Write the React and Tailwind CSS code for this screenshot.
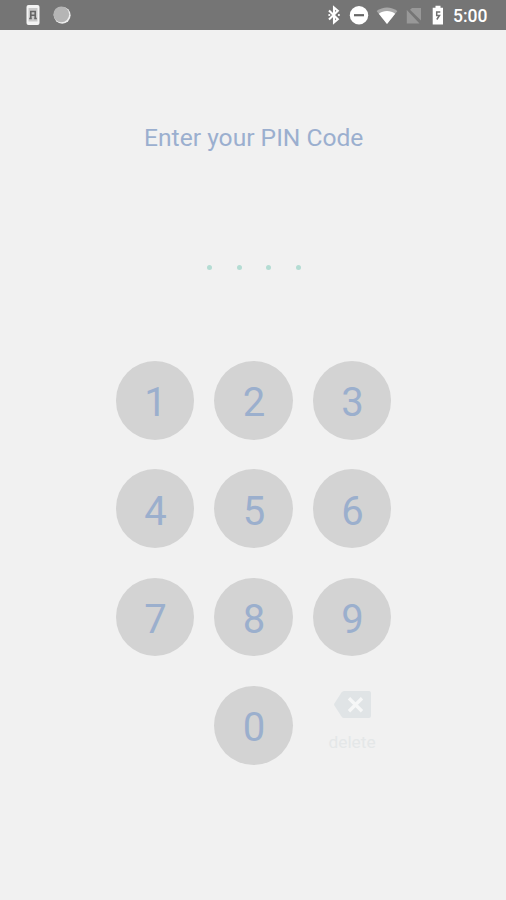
const rows = [
  ['1', '2', '3'],
  ['4', '5', '6'],
  ['7', '8', '9'],
];

function Key({ digit }) {
  return (
    <button className="flex h-[78.5px] w-[78.5px] items-center justify-center rounded-full bg-[#d3d3d3] pt-[6px] pl-[1px] text-[40px] leading-none text-[#9bafcd]">
      {digit}
    </button>
  );
}

function StatusBar() {
  return (
    <header className="flex h-[30px] items-center justify-between bg-[#757575] pr-[19px] pl-[26px] text-white">
      <div className="flex items-center gap-[12px]">
        <svg width="14" height="20" viewBox="0 0 14 20">
          <rect x="0.5" y="0" width="13" height="20" rx="2" fill="#f4f4f4" />
          <rect x="2.5" y="3" width="9" height="13.5" fill="#c9c9c9" />
          <path d="M4.8 13.5V6.5h4.4v7M4.8 10.3h4.4M3.2 13.5h2.6M8.2 13.5h2.6" fill="none" stroke="#666" strokeWidth="1.6" />
        </svg>
        <svg width="20" height="20" viewBox="0 0 20 20">
          <circle cx="10.2" cy="10.3" r="8.4" fill="#efefef" />
          <circle cx="9.3" cy="9.3" r="7.9" fill="#b5b5b5" />
        </svg>
      </div>
      <div className="flex items-center">
        <svg width="14" height="20" viewBox="0 0 14 20">
          <path d="M2 5.5L10.8 14.2L7 17.5V2.5L10.8 5.8L2 14.5" fill="none" stroke="#fff" strokeWidth="2.1" />
          <circle cx="2.3" cy="10" r="1.1" fill="#fff" />
          <circle cx="11.9" cy="10" r="1.1" fill="#fff" />
        </svg>
        <svg className="ml-[8px]" width="20" height="20" viewBox="0 0 20 20">
          <circle cx="10" cy="10.2" r="9.2" fill="#fff" />
          <path d="M5 10.2h10" stroke="#666" strokeWidth="2.2" />
        </svg>
        <svg className="ml-[7px]" width="22" height="20" viewBox="0 0 22 20">
          <path d="M.6 6C6.8 1.3 15.2 1.3 21.4 6L11 19z" fill="#a8a8a8" />
          <path d="M2.8 8.7C7.5 5.2 14.5 5.2 19.2 8.7L11 19z" fill="#fff" />
        </svg>
        <svg className="ml-[7px]" width="18" height="20" viewBox="0 0 18 20">
          <path d="M7 3H16V15.5L5 4.7zM1.8 5L14.5 18.5H1.8z" fill="#989898" />
        </svg>
        <svg className="ml-[9px]" width="12" height="20" viewBox="0 0 12 20">
          <path d="M3.5 0.8h5v2h2.5v16.7H.7V2.8h2.8z" fill="#fff" />
          <path d="M8.3 7H4.7v3.5h2.8L4.8 14.5" fill="none" stroke="#707070" strokeWidth="1.5" />
        </svg>
        <span className="ml-[9px] w-[34px] pt-[3px] text-[17.5px] leading-none font-medium whitespace-nowrap">5:00</span>
      </div>
    </header>
  );
}

export default function App() {
  return (
    <main className="h-[900px] w-[506px] overflow-hidden bg-[#f1f1f1] font-['Roboto',sans-serif]">
      <StatusBar />
      <h1 className="mt-[93px] pl-[1.5px] text-center text-[24.6px] leading-[29px] text-[#9bafcf]">Enter your PIN Code</h1>
      <div className="mt-[113px] ml-[207px] flex gap-[24.6px]">
        {[0, 1, 2, 3].map((dot) => (
          <span key={dot} className="h-[5px] w-[5px] rounded-full bg-[#b4dcd3]" />
        ))}
      </div>
      <section className="mt-[91.2px] ml-[115.8px] flex flex-col gap-[29.8px]">
        {rows.map((row) => (
          <div key={row[0]} className="flex gap-[20px]">
            {row.map((digit) => (
              <Key key={digit} digit={digit} />
            ))}
          </div>
        ))}
        <div className="flex gap-[20px] pl-[98.5px]">
          <Key digit="0" />
          <button className="flex w-[78.5px] flex-col items-center text-[#e4e7e8]">
            <svg className="mt-[5.3px]" width="37" height="27" viewBox="0 0 37 27">
              <path d="M10 0H35Q37 0 37 2V25Q37 27 35 27H10Q8.5 27 7.5 25.5L.4 14.5Q-.2 13.5.4 12.5L7.5 1.5Q8.5 0 10 0z" fill="#e0e4e6" />
              <path d="M15 7.2L28 20.2M28 7.2L15 20.2" stroke="#f6f7f7" strokeWidth="3.4" />
            </svg>
            <span className="mt-[14px] text-[17.3px] leading-[20px]">delete</span>
          </button>
        </div>
      </section>
    </main>
  );
}
